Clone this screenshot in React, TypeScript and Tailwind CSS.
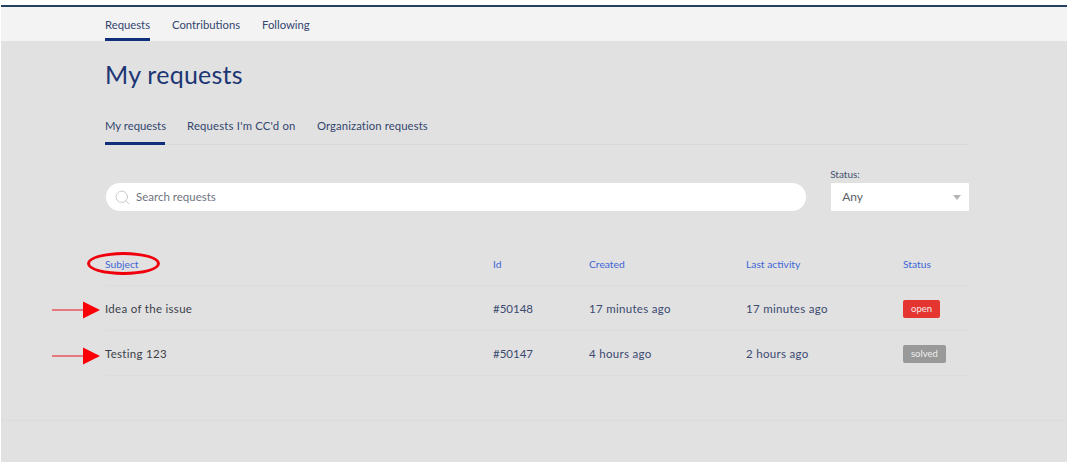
import { Search } from 'lucide-react';

const rows = [
  { subject: 'Idea of the issue', id: '#50148', created: '17 minutes ago', active: '17 minutes ago', status: 'open' },
  { subject: 'Testing 123', id: '#50147', created: '4 hours ago', active: '2 hours ago', status: 'solved' },
];

const gridCols = 'grid grid-cols-[388px_96px_157px_157px_66px]';

// red hand-drawn style arrow pointing at a row
const Arrow = ({ className }: { className: string }) => (
  <svg width="50" height="18" viewBox="0 0 50 18" className={className}>
    <path d="M0 9H34" stroke="#e8141c" strokeWidth="1" />
    <path d="M31 0.5L48 9L31 17.5Z" fill="#fb0007" />
  </svg>
);

const App = () => {
  return (
    <div className="relative h-[462px] w-[1070px] overflow-hidden bg-white font-['Lato',sans-serif]">
      <div className="ml-px mr-[3px] mt-[5px] flex h-[457px] flex-col bg-[#e1e1e1]">
        <div className="h-[2px] bg-[#24405f]" />

        {/* Top nav */}
        <nav className="flex h-[34px] gap-[22px] bg-[#f3f3f3] pl-[104px] text-[11.3px] text-[#34466f]">
          <a className="flex w-[45px] flex-col items-center border-b-[3px] border-[#0f2f7a] pt-[10px] leading-[15px]">Requests</a>
          <a className="w-[68px] whitespace-nowrap pt-[10px] text-center leading-[15px]">Contributions</a>
          <a className="w-[47px] pt-[10px] text-center leading-[15px]">Following</a>
        </nav>

        <main className="flex flex-1 flex-col pl-[104px] pr-[98px]">
          <h1 className="mt-[18px] text-[25px] font-normal leading-[30px] tracking-[0.25px] text-[#1c3674]">My requests</h1>

          {/* Sub tabs */}
          <div className="mt-[19px] flex h-[37px] gap-[22px] border-b border-[#d9d9d9] text-[11.3px] text-[#34466f]">
            <a className="h-[37px] w-[60px] whitespace-nowrap border-b-[3px] border-[#0f2f7a] pt-[10px] text-center leading-[15px]">My requests</a>
            <a className="w-[108px] whitespace-nowrap pt-[10px] text-center leading-[15px] tracking-[0.2px]">Requests I'm CC'd on</a>
            <a className="w-[110px] whitespace-nowrap pt-[10px] text-center leading-[15px] tracking-[0.1px]">Organization requests</a>
          </div>

          {/* Filters */}
          <div className="mt-[24px] flex items-end gap-[25px] pl-px">
            <div className="flex h-[28px] w-[701px] items-center rounded-full bg-white pl-[8px] text-[11.5px] text-[#6f7480]">
              <Search size={17} strokeWidth={1} className="text-[#b4b6b8]" />
              <span className="ml-[5px]">Search requests</span>
            </div>
            <div className="flex w-[138px] flex-col">
              <label className="-ml-px mb-[3px] text-[10px] leading-[11px] text-[#44506e]">Status:</label>
              <div className="flex h-[28px] items-center justify-between rounded-[1px] bg-white pl-[11px] pr-[8px] text-[12px] text-[#5c6068]">
                <span>Any</span>
                <span className="h-0 w-0 border-x-[4px] border-t-[5px] border-x-transparent border-t-[#b5b5b5]" />
              </div>
            </div>
          </div>

          {/* Request table */}
          <div className="mt-[38px] text-[11.5px]">
            <div className={`${gridCols} h-[37px] items-center border-b border-[#dcdcdc] pb-[5px] text-[10.3px] text-[#3f66d6]`}>
              <span>Subject</span>
              <span>Id</span>
              <span>Created</span>
              <span>Last activity</span>
              <span>Status</span>
            </div>
            {rows.map((row) => (
              <div key={row.id} className={`${gridCols} h-[45px] items-center border-b border-[#dcdcdc] pt-px text-[#3b4a70]`}>
                <span className="tracking-[0.3px] text-[#3b3f4a]">{row.subject}</span>
                <span>{row.id}</span>
                <span className="tracking-[0.3px]">{row.created}</span>
                <span className="tracking-[0.3px]">{row.active}</span>
                <span>
                  <span
                    className={
                      row.status === 'open'
                        ? 'inline-block h-[18px] rounded-[2px] bg-[#e53530] px-[8px] text-[9.5px] leading-[18px] text-[#f8e8e8]'
                        : 'inline-block h-[18px] rounded-[2px] bg-[#999999] px-[8px] text-[9.5px] leading-[18px] text-[#eeeeee]'
                    }
                  >
                    {row.status}
                  </span>
                </span>
              </div>
            ))}
          </div>
        </main>

        <div className="mb-[41px] h-px bg-[#dcdcdc]" />
      </div>

      {/* Screenshot annotations */}
      <div className="absolute left-[87px] top-[252px] h-[23px] w-[73px] rounded-[50%] border-[3px] border-[#f0000c]" />
      <Arrow className="absolute left-[52px] top-[301px]" />
      <Arrow className="absolute left-[52px] top-[347px]" />
    </div>
  );
};

export default App;
